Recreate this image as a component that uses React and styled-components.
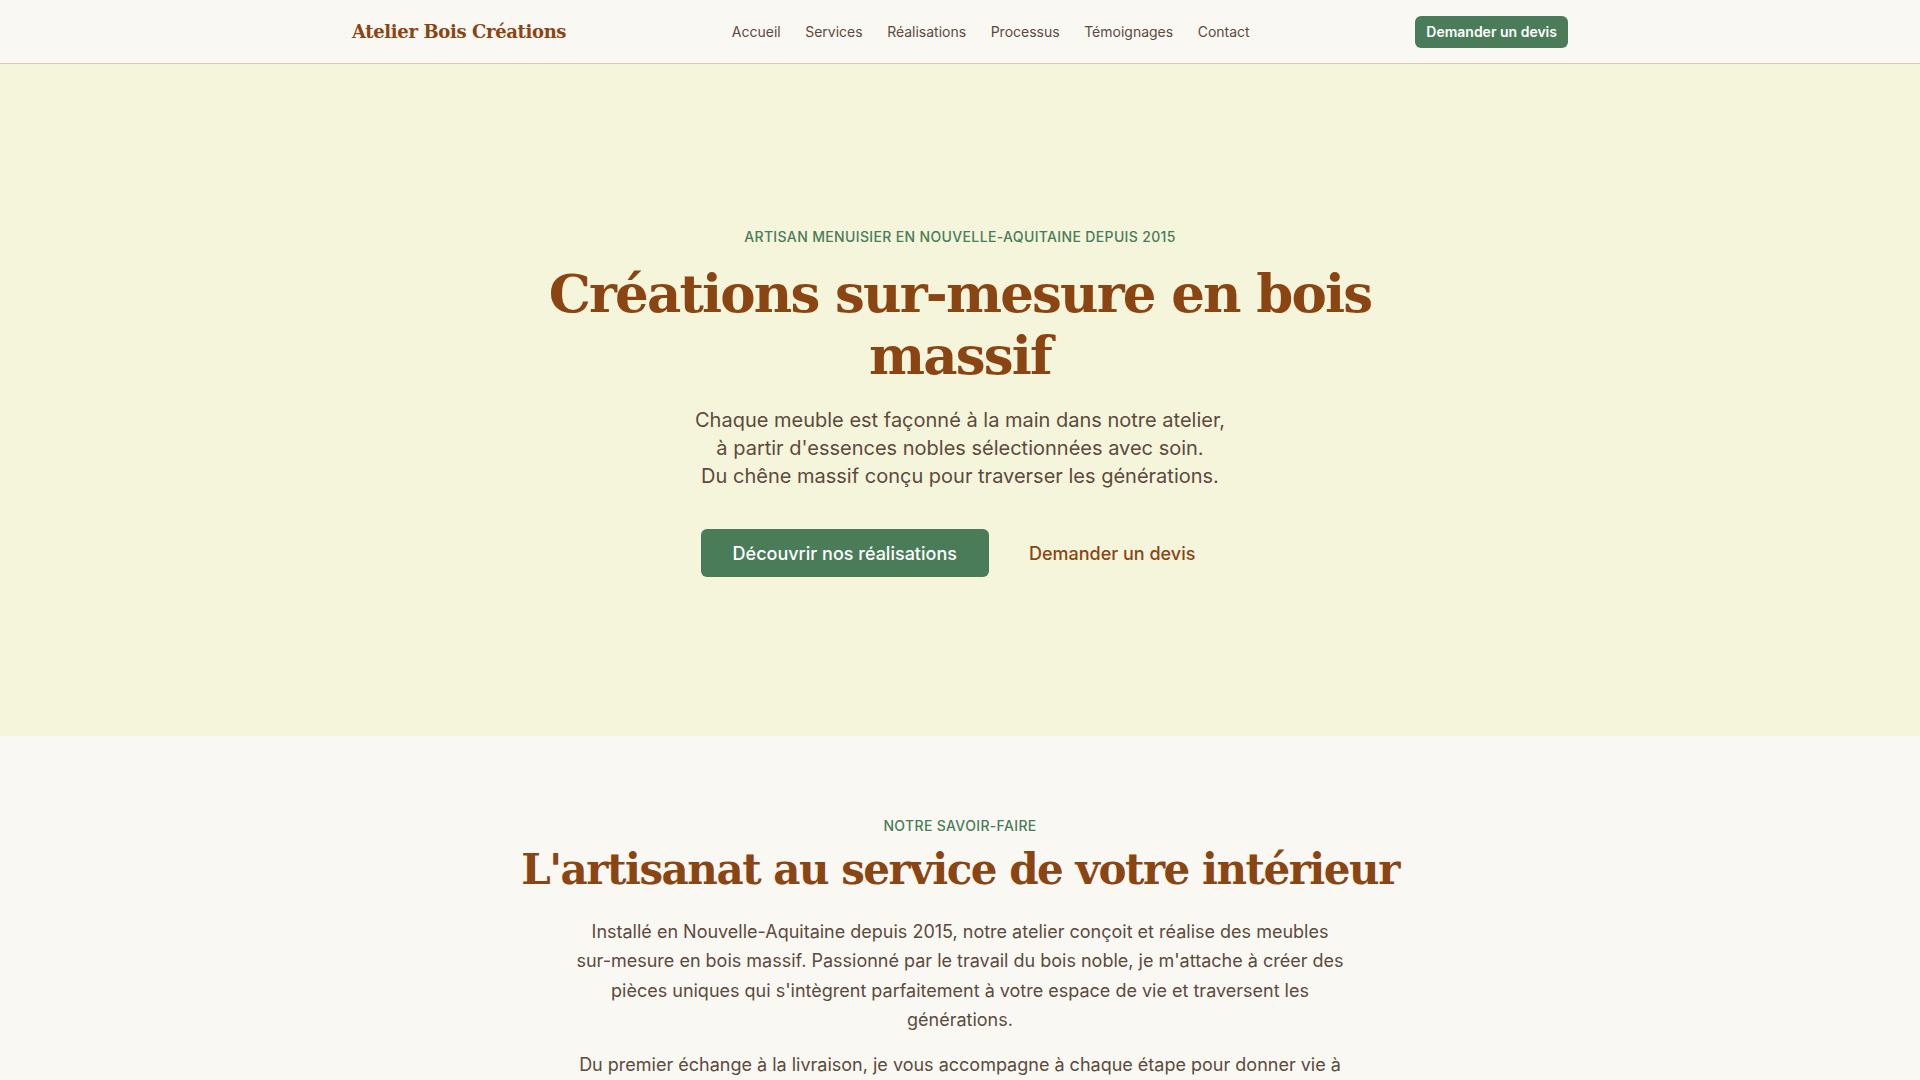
import React from "react";
import styled, { createGlobalStyle } from "styled-components";

const GlobalStyle = createGlobalStyle`
  * { box-sizing: border-box; }
  html, body { margin: 0; padding: 0; }
  body {
    background: #faf8f3;
    font-family: Inter, "Noto Sans", sans-serif;
    color: #5c4a3d;
    -webkit-font-smoothing: antialiased;
  }
  h1, h2, p { margin: 0; }
`;

const serif = `"DejaVu Serif", "Liberation Serif", serif`;

const Header = styled.header`
  background: #faf8f3;
  border-bottom: 1px solid #d8c9b0;
`;

const Container = styled.div`
  max-width: 1280px;
  margin: 0 auto;
  padding: 0 32px;
`;

const NavBar = styled(Container)`
  height: 63px;
  display: flex;
  align-items: center;
  justify-content: space-between;
`;

const Logo = styled.a`
  font-family: ${serif};
  font-weight: 700;
  font-size: 18px;
  letter-spacing: -0.02em;
  color: #8b4513;
  text-decoration: none;
`;

const NavLinks = styled.nav`
  display: flex;
  gap: 24.5px;
`;

const NavLink = styled.a`
  font-size: 14px;
  color: #5c4a3d;
  text-decoration: none;
`;

const SmallButton = styled.a`
  display: inline-flex;
  align-items: center;
  height: 32px;
  padding: 0 11px;
  background: #4a7c59;
  color: #fff;
  font-size: 14px;
  font-weight: 600;
  border-radius: 6px;
  text-decoration: none;
`;

const Hero = styled.section`
  background: #f5f5dc;
  height: 672px;
  padding-top: 163px;
  display: flex;
  justify-content: center;
  text-align: center;
`;

const HeroInner = styled.div`
  max-width: 960px;
  display: flex;
  flex-direction: column;
  align-items: center;
`;

const Eyebrow = styled.p`
  font-size: 14px;
  line-height: 20px;
  letter-spacing: 0.025em;
  text-transform: uppercase;
  color: #4a7c59;
  font-weight: 500;
`;

const Title = styled.h1`
  margin-top: 16px;
  font-family: ${serif};
  font-weight: 700;
  font-size: 53px;
  line-height: 61.6px;
  color: #8b4513;
  letter-spacing: -0.035em;
`;

const Lead = styled.p`
  margin-top: 20px;
  font-size: 20px;
  line-height: 28px;
  color: #5c4a3d;
`;

const Actions = styled.div`
  margin-top: 39px;
  display: flex;
  gap: 16px;
`;

const Button = styled.a`
  display: inline-flex;
  align-items: center;
  height: 48px;
  padding: 0 ${(p) => (p.$ghost ? "24px" : "32px")};
  border-radius: 6px;
  font-size: 18px;
  font-weight: 500;
  background: ${(p) => (p.$ghost ? "transparent" : "#4a7c59")};
  color: ${(p) => (p.$ghost ? "#8b4513" : "#fff")};
  text-decoration: none;
`;

const About = styled.section`
  padding: 80px 0;
  text-align: center;
`;

const AboutInner = styled.div`
  max-width: 1100px;
  margin: 0 auto;
  display: flex;
  flex-direction: column;
  align-items: center;
`;

const SectionTitle = styled.h2`
  margin-top: 8px;
  font-family: ${serif};
  font-weight: 700;
  font-size: 42px;
  line-height: 52px;
  color: #8b4513;
  letter-spacing: -0.035em;
`;

const Body = styled.div`
  margin-top: 21px;
  max-width: 768px;
  display: flex;
  flex-direction: column;
  gap: 16px;
`;

const BodyText = styled.p`
  font-size: 18px;
  line-height: 29.25px;
  color: #5c4a3d;
`;

export default function App() {
  return (
    <>
      <GlobalStyle />
      <Header>
        <NavBar>
          <Logo href="#">Atelier Bois Créations</Logo>
          <NavLinks>
            {["Accueil", "Services", "Réalisations", "Processus", "Témoignages", "Contact"].map((l) => (
              <NavLink key={l} href="#">{l}</NavLink>
            ))}
          </NavLinks>
          <SmallButton href="#">Demander un devis</SmallButton>
        </NavBar>
      </Header>
      <Hero>
        <HeroInner>
          <Eyebrow>Artisan menuisier en Nouvelle-Aquitaine depuis 2015</Eyebrow>
          <Title>
            Créations sur-mesure en bois
            <br />
            massif
          </Title>
          <Lead>
            Chaque meuble est façonné à la main dans notre atelier,
            <br />
            à partir d'essences nobles sélectionnées avec soin.
            <br />
            Du chêne massif conçu pour traverser les générations.
          </Lead>
          <Actions>
            <Button href="#">Découvrir nos réalisations</Button>
            <Button href="#" $ghost>Demander un devis</Button>
          </Actions>
        </HeroInner>
      </Hero>
      <About>
        <AboutInner>
          <Eyebrow>Notre savoir-faire</Eyebrow>
          <SectionTitle>L'artisanat au service de votre intérieur</SectionTitle>
          <Body>
            <BodyText>
              Installé en Nouvelle-Aquitaine depuis 2015, notre atelier conçoit et réalise des meubles
              sur-mesure en bois massif. Passionné par le travail du bois noble, je m'attache à créer des
              pièces uniques qui s'intègrent parfaitement à votre espace de vie et traversent les
              générations.
            </BodyText>
            <BodyText>
              Du premier échange à la livraison, je vous accompagne à chaque étape pour donner vie à
              vos projets, en alliant savoir-faire traditionnel et exigence de qualité.
            </BodyText>
          </Body>
        </AboutInner>
      </About>
    </>
  );
}
